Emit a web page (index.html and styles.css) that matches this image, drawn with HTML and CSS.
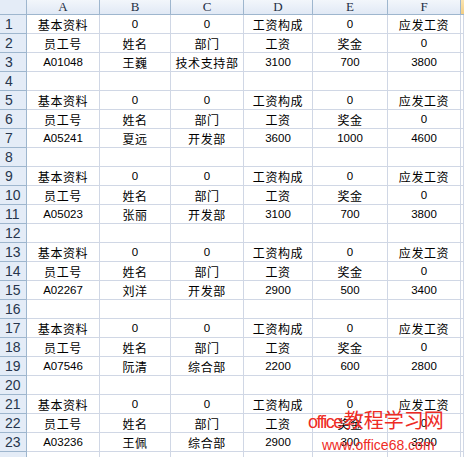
FILE: index.html
```html
<!DOCTYPE html>
<html>
<head>
<meta charset="utf-8">
<link rel="stylesheet" href="styles.css">
</head>
<body>
<div class="sheet">
  <div class="row head">
    <div class="corner"></div><div class="ch">A</div><div class="ch">B</div><div class="ch">C</div><div class="ch">D</div><div class="ch">E</div><div class="ch">F</div><div class="ch sel"></div>
  </div>
  <div class="row"><div class="rh">1</div><div class="c">基本资料</div><div class="c n">0</div><div class="c n">0</div><div class="c">工资构成</div><div class="c n">0</div><div class="c">应发工资</div><div class="c"></div></div>
  <div class="row"><div class="rh">2</div><div class="c">员工号</div><div class="c">姓名</div><div class="c">部门</div><div class="c">工资</div><div class="c">奖金</div><div class="c n">0</div><div class="c"></div></div>
  <div class="row"><div class="rh">3</div><div class="c n">A01048</div><div class="c">王巍</div><div class="c">技术支持部</div><div class="c n">3100</div><div class="c n">700</div><div class="c n">3800</div><div class="c"></div></div>
  <div class="row"><div class="rh">4</div><div class="c"></div><div class="c"></div><div class="c"></div><div class="c"></div><div class="c"></div><div class="c"></div><div class="c"></div></div>
  <div class="row"><div class="rh">5</div><div class="c">基本资料</div><div class="c n">0</div><div class="c n">0</div><div class="c">工资构成</div><div class="c n">0</div><div class="c">应发工资</div><div class="c"></div></div>
  <div class="row"><div class="rh">6</div><div class="c">员工号</div><div class="c">姓名</div><div class="c">部门</div><div class="c">工资</div><div class="c">奖金</div><div class="c n">0</div><div class="c"></div></div>
  <div class="row"><div class="rh">7</div><div class="c n">A05241</div><div class="c">夏远</div><div class="c">开发部</div><div class="c n">3600</div><div class="c n">1000</div><div class="c n">4600</div><div class="c"></div></div>
  <div class="row"><div class="rh">8</div><div class="c"></div><div class="c"></div><div class="c"></div><div class="c"></div><div class="c"></div><div class="c"></div><div class="c"></div></div>
  <div class="row"><div class="rh">9</div><div class="c">基本资料</div><div class="c n">0</div><div class="c n">0</div><div class="c">工资构成</div><div class="c n">0</div><div class="c">应发工资</div><div class="c"></div></div>
  <div class="row"><div class="rh">10</div><div class="c">员工号</div><div class="c">姓名</div><div class="c">部门</div><div class="c">工资</div><div class="c">奖金</div><div class="c n">0</div><div class="c"></div></div>
  <div class="row"><div class="rh">11</div><div class="c n">A05023</div><div class="c">张丽</div><div class="c">开发部</div><div class="c n">3100</div><div class="c n">700</div><div class="c n">3800</div><div class="c"></div></div>
  <div class="row"><div class="rh">12</div><div class="c"></div><div class="c"></div><div class="c"></div><div class="c"></div><div class="c"></div><div class="c"></div><div class="c"></div></div>
  <div class="row"><div class="rh">13</div><div class="c">基本资料</div><div class="c n">0</div><div class="c n">0</div><div class="c">工资构成</div><div class="c n">0</div><div class="c">应发工资</div><div class="c"></div></div>
  <div class="row"><div class="rh">14</div><div class="c">员工号</div><div class="c">姓名</div><div class="c">部门</div><div class="c">工资</div><div class="c">奖金</div><div class="c n">0</div><div class="c"></div></div>
  <div class="row"><div class="rh">15</div><div class="c n">A02267</div><div class="c">刘洋</div><div class="c">开发部</div><div class="c n">2900</div><div class="c n">500</div><div class="c n">3400</div><div class="c"></div></div>
  <div class="row"><div class="rh">16</div><div class="c"></div><div class="c"></div><div class="c"></div><div class="c"></div><div class="c"></div><div class="c"></div><div class="c"></div></div>
  <div class="row"><div class="rh">17</div><div class="c">基本资料</div><div class="c n">0</div><div class="c n">0</div><div class="c">工资构成</div><div class="c n">0</div><div class="c">应发工资</div><div class="c"></div></div>
  <div class="row"><div class="rh">18</div><div class="c">员工号</div><div class="c">姓名</div><div class="c">部门</div><div class="c">工资</div><div class="c">奖金</div><div class="c n">0</div><div class="c"></div></div>
  <div class="row"><div class="rh">19</div><div class="c n">A07546</div><div class="c">阮清</div><div class="c">综合部</div><div class="c n">2200</div><div class="c n">600</div><div class="c n">2800</div><div class="c"></div></div>
  <div class="row"><div class="rh">20</div><div class="c"></div><div class="c"></div><div class="c"></div><div class="c"></div><div class="c"></div><div class="c"></div><div class="c"></div></div>
  <div class="row"><div class="rh">21</div><div class="c">基本资料</div><div class="c n">0</div><div class="c n">0</div><div class="c">工资构成</div><div class="c n">0</div><div class="c">应发工资</div><div class="c"></div></div>
  <div class="row"><div class="rh">22</div><div class="c">员工号</div><div class="c">姓名</div><div class="c">部门</div><div class="c">工资</div><div class="c">奖金</div><div class="c n">0</div><div class="c"></div></div>
  <div class="row"><div class="rh">23</div><div class="c n">A03236</div><div class="c">王佩</div><div class="c">综合部</div><div class="c n">2900</div><div class="c n">300</div><div class="c n">3200</div><div class="c"></div></div>
  <div class="row"><div class="rh"></div><div class="c"></div><div class="c"></div><div class="c"></div><div class="c"></div><div class="c"></div><div class="c"></div><div class="c"></div></div>

  <div class="watermark">
    <div class="wm-title"><span class="wm-latin">office</span>教程学习网</div>
    <div class="wm-url">www.office68.com</div>
  </div>
</div>
</body>
</html>
```

FILE: styles.css
```css
html, body {
  margin: 0;
  padding: 0;
  background: #ffffff;
  overflow: hidden;
}

.sheet {
  position: relative;
  width: 464px;
  height: 457px;
  overflow: hidden;
  font-family: "Liberation Sans", "Noto Sans CJK SC", sans-serif;
  font-size: 12px;
  color: #000;
}

.row {
  display: grid;
  grid-template-columns: 27px 73px 71px 73px 69px 75px 73px 1fr;
  height: 19px;
}

.row.head {
  height: 15px;
}

.row > div {
  box-sizing: border-box;
  border-right: 1px solid #d0d7e5;
  border-bottom: 1px solid #d0d7e5;
  display: flex;
  align-items: center;
  justify-content: center;
  white-space: nowrap;
  overflow: hidden;
}

.head > div {
  background: linear-gradient(#f2f6fb, #e1e9f5);
  border-right-color: #9eb6ce;
  border-bottom-color: #9eb6ce;
  font-family: "Liberation Serif", serif;
  font-size: 13px;
  color: #1f2f45;
}

.head > .corner {
  background: #e4ecf7;
}

.head > .sel {
  background: linear-gradient(#fbe4b0, #f4cf85);
  border-right: none;
}

.rh {
  background: #e4ecf7;
  justify-content: flex-start !important;
  padding-left: 5px;
  border-right-color: #9eb6ce !important;
  border-bottom-color: #9eb6ce !important;
  font-family: "Liberation Sans", sans-serif;
  font-size: 14px;
  color: #27364d;
}

.c {
  letter-spacing: 0.6px;
}

.c.n {
  letter-spacing: 0;
  font-size: 11.5px;
}

.watermark {
  position: absolute;
  left: 308px;
  top: 408px;
  color: #ee2b24;
}

.wm-title {
  font-family: "Noto Sans CJK SC", sans-serif;
  font-size: 20px;
  line-height: 24px;
  white-space: nowrap;
}

.wm-latin {
  font-family: "Liberation Sans", sans-serif;
  font-size: 18px;
  letter-spacing: -1.5px;
  margin-right: 2px;
}

.wm-url {
  font-family: "Liberation Sans", sans-serif;
  font-size: 14px;
  line-height: 16px;
  margin-left: 14px;
  margin-top: 3px;
  white-space: nowrap;
}
```
